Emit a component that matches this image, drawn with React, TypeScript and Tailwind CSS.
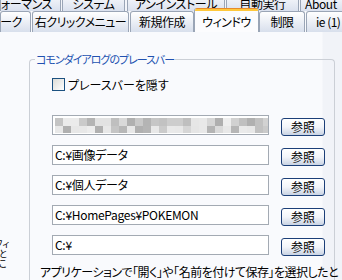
import React from "react";

const FONT = "font-['Noto_Sans_CJK_JP','Noto_Sans_CJK_SC',sans-serif] [font-feature-settings:'palt']";

function shades(seed: number, n: number): string[] {
  let s = seed;
  const out: string[] = [];
  for (let i = 0; i < n; i++) {
    s = (s * 1103515245 + 12345) % 2147483648;
    const v = 175 + (s % 65);
    out.push(`rgb(${v},${v},${v})`);
  }
  return out;
}

const row1 = shades(7, 27);
const row2 = shades(91, 27).map((c, i) => (i % 3 === 0 ? "rgb(232,232,232)" : c));

function Tab({ label, w, ml, align = "justify-center", pad = "" }: { label: string; w: string; ml: string; align?: string; pad?: string }) {
  return (
    <div
      className={`${w} ${ml} shrink-0 h-[20px] pt-[6px] flex items-center ${align} ${pad} border-x border-[#9AA5B6] bg-gradient-to-b from-[#FFFFFF] to-[#DAE1EE] rounded-t-[3px] text-[12px] leading-none tracking-[-0.4px] text-black whitespace-nowrap overflow-hidden`}
    >
      {label}
    </div>
  );
}

function Tab2({ label, w, ml, align = "justify-center", pad = "" }: { label: string; w: string; ml: string; align?: string; pad?: string }) {
  return (
    <div
      className={`${w} ${ml} shrink-0 h-[21px] flex items-center ${align} ${pad} border-x border-t border-[#9AA5B6] bg-gradient-to-b from-[#FFFFFF] to-[#D8DFEC] rounded-t-[3px] text-[12px] leading-none tracking-[-0.5px] text-black whitespace-nowrap overflow-hidden`}
    >
      {label}
    </div>
  );
}

function Button() {
  return (
    <div className="mt-[3px] w-[44px] h-[18px] shrink-0 flex items-center justify-center rounded-[3px] border border-[#1C3F78] bg-gradient-to-b from-[#FFFFFF] via-[#F3F5FA] to-[#C9D3E3] text-[12px] leading-none text-black">
      参照
    </div>
  );
}

function PathRow({ children }: { children: React.ReactNode }) {
  return (
    <div className="flex items-start">
      <div className="w-[217px] h-[20px] border border-[#A3AAB3] bg-white flex items-center pl-[2px] text-[12px] leading-none tracking-[-0.3px] text-black whitespace-nowrap overflow-hidden">
        {children}
      </div>
      <div className="ml-[12px]">
        <Button />
      </div>
    </div>
  );
}

export default function App() {
  return (
    <div className={`w-[342px] h-[280px] overflow-hidden bg-[#F9FAFD] ${FONT}`}>
      {/* tab row 1 */}
      <div className="h-[11px] overflow-hidden flex items-end bg-[#F3F5FA]">
        <Tab label="フォーマンス" w="w-[61px]" ml="ml-0" align="justify-end" pad="pr-[8px]" />
        <Tab label="システム" w="w-[63px]" ml="ml-[1px]" />
        <Tab label="アンインストール" w="w-[98px]" ml="ml-[2px]" />
        <Tab label="自動実行" w="w-[73px]" ml="ml-[1px]" />
        <Tab label="About" w="w-[60px]" ml="ml-[1px]" align="justify-start" pad="pl-[4px]" />
      </div>
      {/* tab row 2 */}
      <div className="relative -mt-[3px] h-[24px] flex items-end">
        <Tab2 label="ワーク" w="w-[31px]" ml="ml-0" align="justify-end" pad="pr-[8px]" />
        <Tab2 label="右クリックメニュー" w="w-[97px]" ml="ml-[1px]" />
        <Tab2 label="新規作成" w="w-[64px]" ml="ml-[1px]" />
        <div className="relative z-10 w-[65px] h-[24px] shrink-0 flex flex-col border-x border-[#9AA5B6] bg-[#FCFCFE] rounded-t-[3px] overflow-hidden">
          <div className="h-[1px] bg-[#E68B2C]" />
          <div className="h-[2px] bg-[#FFC83C]" />
          <div className="flex-1 flex items-center justify-center text-[12px] leading-none tracking-[-0.5px] text-black whitespace-nowrap">ウィンドウ</div>
        </div>
        <Tab2 label="制限" w="w-[46px]" ml="ml-0" />
        <Tab2 label="ie (1)" w="w-[60px]" ml="ml-[1px]" align="justify-start" pad="pl-[9px]" />
      </div>

      {/* page */}
      <div className="h-[248px] flex bg-[linear-gradient(to_right,#F9FAFD_322px,#F1F3F8_323px)]">
        <div className="w-[29px] shrink-0 overflow-hidden">
          <div className="mt-[207px] -ml-[5px] w-[40px] text-[9px] leading-[10px] text-black whitespace-nowrap">
            <div className="h-[10px]">フィ</div>
            <div className="h-[10px] pl-[4px]">と</div>
            <div className="h-[10px] pl-[4px]">こ</div>
          </div>
        </div>
        <div className="mt-[20px] w-[306px] h-[260px] flex flex-col">
          {/* group header with caption on the border */}
          <div className="h-[14px] flex">
            <div className="w-[6px] h-[7px] self-end border-l border-t border-[#CBCFD6] rounded-tl-[4px]" />
            <span className="px-[1px] text-[11px] leading-[14px] tracking-[-1px] text-[#2251B0] whitespace-nowrap">コモンダイアログのプレースバー</span>
            <div className="flex-1 h-[7px] self-end border-r border-t border-[#CBCFD6] rounded-tr-[4px]" />
          </div>
          <div className="flex-1 border-x border-[#CBCFD6] pl-[22px]">
            <div className="mt-[12px] flex items-center h-[13px]">
              <div className="w-[13px] h-[13px] border border-[#1C5180] bg-gradient-to-br from-[#DCDCD7] to-[#FFFFFF]" />
              <span className="ml-[3px] text-[12px] leading-none text-black">プレースバーを隠す</span>
            </div>
            <div className="mt-[24px] flex flex-col gap-[9px]">
              <PathRow>
                <div className="flex flex-col">
                  <div className="flex">
                    {row1.map((c, i) => (
                      <div key={i} className="w-[8px] h-[8px]" style={{ backgroundColor: c }} />
                    ))}
                  </div>
                  <div className="flex">
                    {row2.map((c, i) => (
                      <div key={i} className="w-[8px] h-[7px]" style={{ backgroundColor: c }} />
                    ))}
                  </div>
                </div>
              </PathRow>
              <PathRow>C:¥画像データ</PathRow>
              <PathRow>C:¥個人データ</PathRow>
              <PathRow>C:¥HomePages¥POKEMON</PathRow>
              <PathRow>C:¥</PathRow>
            </div>
            <div className="mt-[9px] -ml-[12px] text-[12px] leading-[14px] tracking-[-0.5px] text-black whitespace-nowrap">
              アプリケーションで「開く」や「名前を付けて保存」を選択したと
            </div>
          </div>
        </div>
      </div>
    </div>
  );
}
